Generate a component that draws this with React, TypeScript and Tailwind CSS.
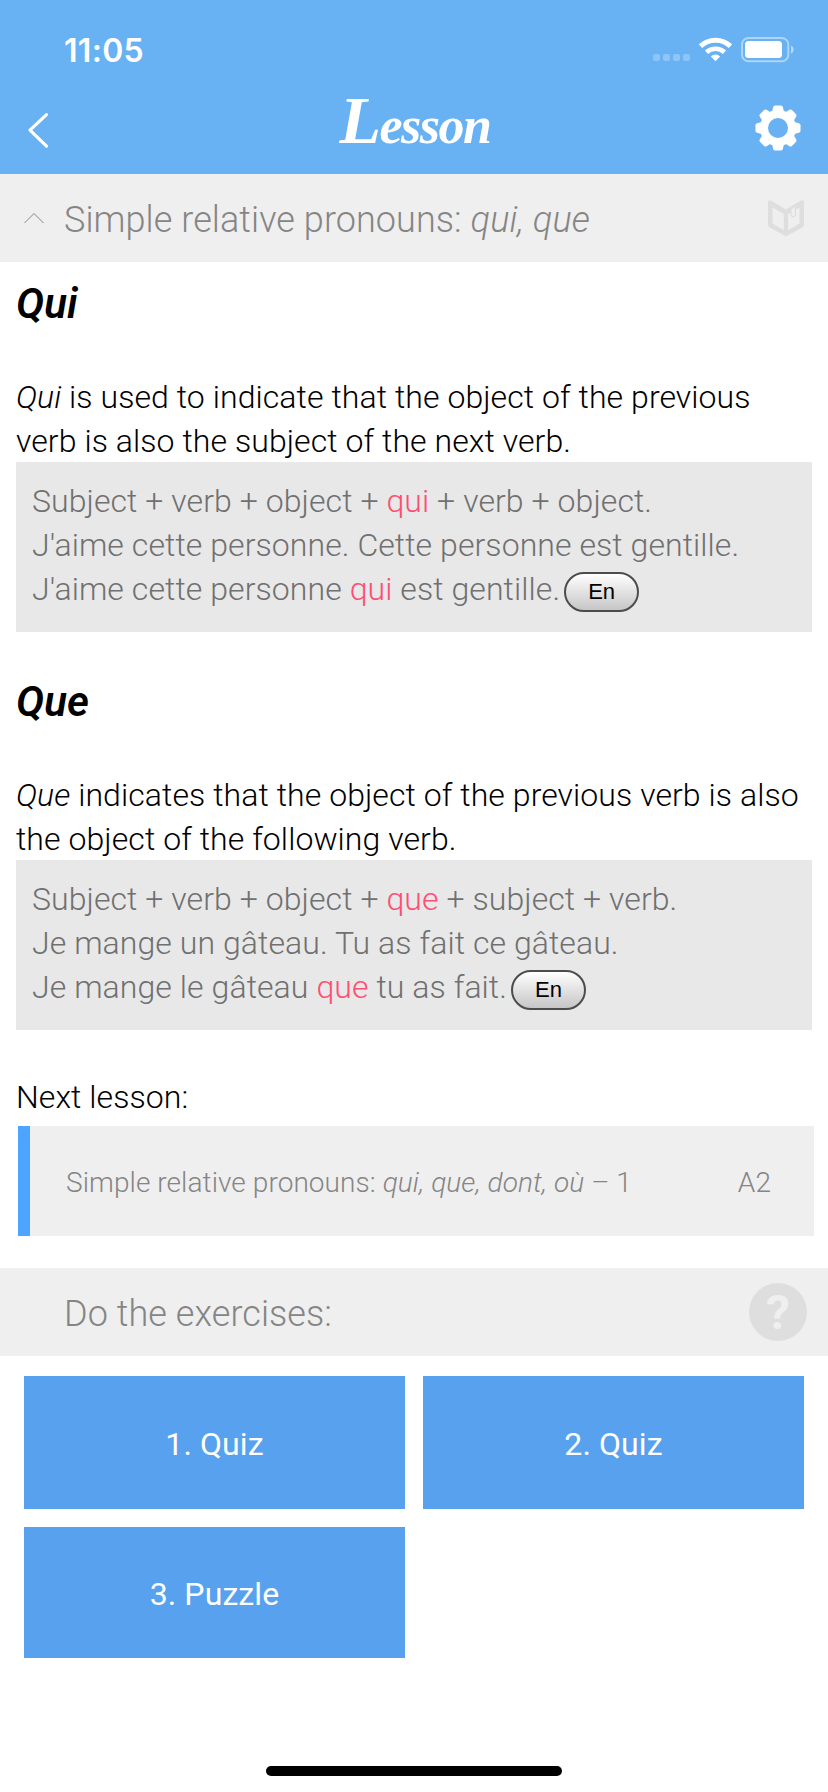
import type { ReactNode } from 'react';

const TEETH = [0, 45, 90, 135, 180, 225, 270, 315];

function StatusBar() {
  return (
    <div className="flex h-[88px] items-start justify-between pl-16 pr-[34px]">
      <span className="mt-8 font-['Inter'] text-[32px] leading-[38px] font-semibold tracking-[0.3px] text-white">11:05</span>
      <svg className="mt-[36px]" width="142" height="28" viewBox="652 36 142 28">
        {[653, 663, 673, 683].map((x) => (
          <rect key={x} x={x} y="54" width="7" height="7" rx="2" fill="#fff" opacity=".25" />
        ))}
        <g fill="none" stroke="#fff">
          <path d="M700.5 46.2a22 22 0 0 1 30 0" strokeWidth="5" />
          <path d="M706.5 52.2a13.5 13.5 0 0 1 18 0" strokeWidth="4.6" />
        </g>
        <path d="M715.5 61.2l-4.6-4.8a6.6 6.6 0 0 1 9.2 0z" fill="#fff" />
        <rect x="742" y="38" width="46.3" height="23.3" rx="6.5" fill="none" stroke="#fff" strokeWidth="2" opacity=".45" />
        <rect x="745" y="41" width="37" height="17" rx="3.5" fill="#fff" />
        <path d="M791 45.5c3.4 1.2 3.4 7 0 8.2z" fill="#fff" opacity=".5" />
      </svg>
    </div>
  );
}

function NavBar() {
  return (
    <div className="flex h-[86px] items-start justify-between pl-[26px] pr-[26px]">
      <svg className="mt-6" width="48" height="40" viewBox="26 112 48 40" fill="none" stroke="#fff" strokeWidth="3.2" strokeLinecap="round" strokeLinejoin="round">
        <path d="M46.5 114.7L30 130.2l16.5 16" />
      </svg>
      <h1 className="-mt-px pl-0.5 font-['Liberation_Serif',serif] text-[52px] leading-[66px] font-bold italic tracking-[-1.5px] text-white first-letter:text-[68px] first-letter:leading-[66px]">Lesson</h1>
      <svg className="mt-[15px]" width="48" height="50" viewBox="-24 -25 48 50" fill="#fff">
        <path fillRule="evenodd" d="M0-18a18 18 0 1 0 0 36a18 18 0 1 0 0-36zM0-10a10 10 0 1 1 0 20a10 10 0 1 1 0-20z" />
        {TEETH.map((a) => (
          <path key={a} transform={`rotate(${a})`} d="M-6-16l1.2-5q.4-1.5 2-1.5h5.6q1.6 0 2 1.5l1.2 5z" />
        ))}
      </svg>
    </div>
  );
}

function EnButton() {
  return (
    <button className="ml-1 inline-block h-10 w-[75px] rounded-[20px] border-2 border-[#4c4c4c] bg-linear-to-b from-white to-[#c6c6c6] align-middle font-['Liberation_Sans',sans-serif] text-[22px] leading-9 tracking-normal text-black">
      En
    </button>
  );
}

function Mark({ children }: { children: ReactNode }) {
  return <span className="text-[#ff4d73]">{children}</span>;
}

function Section({ title, intro, children }: { title: string; intro: ReactNode; children: ReactNode }) {
  return (
    <section className="h-[398px] px-4 pt-5">
      <h2 className="h-[92px] text-[42px] leading-[44px] font-semibold text-black italic">{title}</h2>
      <div className="h-[88px] pt-px">
        <p className="text-[32px] leading-[44px] whitespace-nowrap text-black">{intro}</p>
      </div>
      <div className="h-[170px] bg-[#e8e8e8] px-4 pt-[17px] text-[32px] whitespace-nowrap text-[#707070]">{children}</div>
    </section>
  );
}

function Line({ children }: { children: ReactNode }) {
  return <p className="h-11 leading-[44px]">{children}</p>;
}

function Tile({ children, className }: { children: ReactNode; className: string }) {
  return <button className={`flex items-center justify-center bg-[#57a1ef] pt-0.5 text-[32px] font-normal tracking-[0.1px] text-white ${className}`}>{children}</button>;
}

export default function App() {
  return (
    <div className="flex h-[1792px] w-[828px] flex-col overflow-hidden bg-white font-['Roboto',sans-serif] font-light tracking-[0.07px]">
      <header className="h-[174px] bg-[#68b2f3]">
        <StatusBar />
        <NavBar />
      </header>

      <div className="flex h-[88px] items-center bg-[#efefef] pr-6 pl-6 text-[36px] text-[#858585]">
        <svg width="20" height="12" viewBox="0 0 20 12" fill="none" stroke="#858585" strokeWidth="1">
          <path d="M.5 11L10 1.5L19.5 11" />
        </svg>
        <span className="ml-5 flex-1 pt-[3px] whitespace-nowrap">
          Simple relative pronouns: <i>qui, que</i>
        </span>
        <svg width="36" height="37" viewBox="0 0 36 37">
          <path fillRule="evenodd" fill="#dedede" d="M0 2Q.3-.6 3 .5L18 9.6 33 .5Q35.7-.6 36 2V24.5q0 2-1.6 3L18 36.3 1.6 27.5Q0 26.5 0 24.5zM4.5 7.5V23.5L15.8 30.2V14zM31.5 7.5L20.2 14V30.2L31.5 23.5z" />
          <path d="M23 10V14.5q0 2.2 2.2 2.2t2.2-2.2V6" fill="#efefef" stroke="#dedede" strokeWidth="1.2" />
        </svg>
      </div>

      <Section title="Qui" intro={<><i>Qui</i> is used to indicate that the object of the previous<br />verb is also the subject of the next verb.</>}>
        <Line>Subject + verb + object + <Mark>qui</Mark> + verb + object.</Line>
        <Line>J'aime cette personne. Cette personne est gentille.</Line>
        <Line>J'aime cette personne <Mark>qui</Mark> est gentille.<EnButton /></Line>
      </Section>
      <Section title="Que" intro={<><i>Que</i> indicates that the object of the previous verb is also<br />the object of the following verb.</>}>
        <Line>Subject + verb + object + <Mark>que</Mark> + subject + verb.</Line>
        <Line>Je mange un gâteau. Tu as fait ce gâteau.</Line>
        <Line>Je mange le gâteau <Mark>que</Mark> tu as fait.<EnButton /></Line>
      </Section>

      <p className="mt-[17px] h-[51px] pl-4 text-[32px] leading-[44px] text-black">Next lesson:</p>
      <div className="mr-[14px] ml-[18px] flex h-[110px] shrink-0 items-center justify-between border-l-[12px] border-[#4da5ff] bg-[#efefef] pt-[3px] pr-[43px] pl-9 text-[28px] text-[#858585]">
        <span>Simple relative pronouns: <i>qui, que, dont, où</i> – 1</span>
        <span>A2</span>
      </div>

      <div className="mt-8 flex h-[88px] shrink-0 items-center justify-between bg-[#efefef] pr-[21px] pl-16 text-[36px] text-[#858585]">
        <span className="pt-[3px]">Do the exercises:</span>
        <span className="flex size-[58px] items-center justify-center rounded-full bg-[#dedede] pt-0.5 text-[48px] leading-[56px] font-bold text-[#efefef]">?</span>
      </div>

      <div className="mt-5 grid grid-cols-[381px_381px] gap-[18px] pl-6">
        <Tile className="h-[133px]">1. Quiz</Tile>
        <Tile className="h-[133px]">2. Quiz</Tile>
        <Tile className="h-[131px]">3. Puzzle</Tile>
      </div>

      <div className="mx-auto mt-auto mb-4 h-[10px] w-[296px] shrink-0 rounded-full bg-black" />
    </div>
  );
}
